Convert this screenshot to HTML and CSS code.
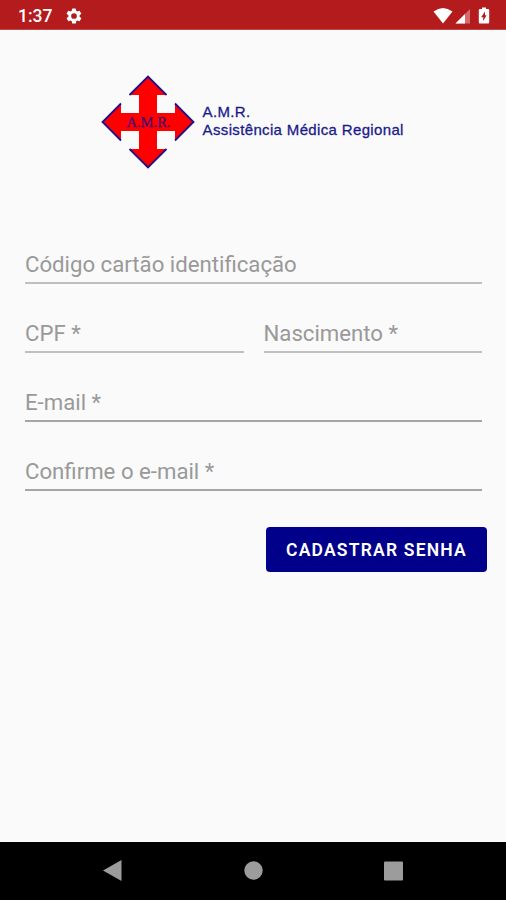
FILE: index.html
```html
<!DOCTYPE html>
<html lang="pt-BR">
<head>
<meta charset="utf-8">
<title>A.M.R. Cadastro</title>
<link rel="stylesheet" href="styles.css">
</head>
<body>
<header class="status">
  <span class="time">1:37</span>
  <svg class="gear" width="18" height="18" viewBox="0 0 24 24"><path fill="#fff" fill-rule="evenodd" d="M19.400 13a7.500 7.500 0 0 0 0-2l2.100-1.600a.5.5 0 0 0 .1-.7l-2-3.400a.5.5 0 0 0-.6-.2l-2.500 1a7.300 7.300 0 0 0-1.700-1l-.4-2.600a.5.5 0 0 0-.5-.5h-4a.5.5 0 0 0-.5.5l-.4 2.600a7.300 7.300 0 0 0-1.700 1l-2.500-1a.5.5 0 0 0-.6.2l-2 3.400a.5.5 0 0 0 .1.700L4.600 11a7.500 7.500 0 0 0 0 2l-2.200 1.600a.5.5 0 0 0-.1.700l2 3.400c.1.200.4.300.6.200l2.500-1a7.300 7.300 0 0 0 1.700 1l.4 2.600c0 .3.200.5.500.5h4c.3 0 .5-.2.5-.5l.4-2.600a7.300 7.300 0 0 0 1.700-1l2.500 1c.2.100.5 0 .6-.2l2-3.400a.5.5 0 0 0-.1-.7zM12 15.800a3.800 3.800 0 1 1 0-7.600 3.800 3.800 0 0 1 0 7.600z"/></svg>
  <svg class="signals" width="60" height="20" viewBox="0 0 60 20">
    <path fill="#fff" d="M.5 5.500Q10 -1.500 19.500 5.500L10 17.500Z"/>
    <path fill="#d66b6d" d="M22.500 17.500L37 3V17.500Z"/>
    <path fill="#fff" d="M22.500 17.500L32 8V17.500Z"/>
    <path fill="#fff" d="M49 1.500h4V3h2.200q1 0 1 1v12.500q0 1-1 1h-8.400q-1 0-1-1V4q0-1 1-1H49z"/>
    <path fill="#b31b1d" d="M52 5.500L48.100 11.300H50.200V15L53.600 9.300H52Z"/>
  </svg>
</header>
<main class="page">
  <div class="brand">
    <svg class="cross" width="94" height="94" viewBox="0 0 94 94">
      <path class="cross-fill" d="M47 1.500L65.500 20H56V38H74V28.500L92.500 47L74 65.500V56H56V74H65.500L47 92.500L28.500 74H38V56H20V65.500L1.500 47L20 28.500V38H38V20H28.500Z"/>
      <path class="cross-edge" d="M28.500 20L47 1.500L65.500 20M74 28.500L92.500 47L74 65.500M65.500 74L47 92.500L28.500 74M20 65.500L1.500 47L20 28.500"/>
      <text class="cross-text" x="25.500" y="51.500" textLength="44" lengthAdjust="spacingAndGlyphs">A.M.R.</text>
    </svg>
    <div class="brand-name"><div>A.M.R.</div><div>Assistência Médica Regional</div></div>
  </div>
  <form class="form">
    <div class="field light"><span>Código cartão identificação</span></div>
    <div class="row">
      <div class="field light"><span>CPF *</span></div>
      <div class="field light"><span>Nascimento *</span></div>
    </div>
    <div class="field"><span>E-mail *</span></div>
    <div class="field"><span>Confirme o e-mail *</span></div>
    <button class="submit" type="button">CADASTRAR SENHA</button>
  </form>
</main>
<footer class="nav">
  <svg width="506" height="58" viewBox="0 0 506 58">
    <path fill="#9c9c9c" d="M103 28.500L121.500 18V39Z"/>
    <circle cx="253.500" cy="28.500" r="9.200" fill="#9c9c9c"/>
    <rect x="384" y="19.500" width="19" height="19" rx="1" fill="#9c9c9c"/>
  </svg>
</footer>
</body>
</html>
```
FILE: styles.css
```css
* { box-sizing: border-box; }
body {
  margin: 0;
  height: 900px;
  display: flex;
  flex-direction: column;
  background: #fafafa;
  font-family: Roboto, sans-serif;
  overflow: hidden;
}
.status {
  height: 30px;
  flex: none;
  display: flex;
  align-items: center;
  padding: 2px 13px 0 18px;
  background: #b31b1d;
  border-bottom: 1px solid #c04a4b;
  color: #fff;
}
.time { width: 47px; font-size: 17.500px; font-weight: 500; line-height: 20px; }
.signals { margin-left: auto; }
.page { flex: 1; display: flex; flex-direction: column; }
.brand { display: flex; margin: 45px 0 0 100.600px; height: 94px; gap: 8px; }
.cross { flex: none; }
.cross-fill { fill: #ff0000; }
.cross-edge { fill: none; stroke: #20108c; stroke-width: 1.800; }
.cross-text { fill: #4a0a70; stroke: #4a0a70; stroke-width: 0.250; font: 14px "Liberation Serif", serif; }
.brand-name {
  padding-top: 28px;
  font: 15px/18px "Liberation Sans", sans-serif;
  color: #1a1a8c;
  letter-spacing: 0.350px;
  white-space: nowrap;
  -webkit-text-stroke: 0.300px #1a1a8c;
}
.form {
  margin: 78px 24px 0 25px;
  display: flex;
  flex-direction: column;
  gap: 32px;
}
.row { display: grid; grid-template-columns: 1fr 1fr; gap: 20px; }
.field {
  height: 37px;
  border-bottom: 2px solid #a5a5a5;
  color: #999;
  font-size: 22.200px;
  line-height: 35px;
  white-space: nowrap;
}
.light { border-bottom-color: #bfbfbf; }
.submit {
  align-self: flex-end;
  width: 221px;
  height: 45px;
  margin: 4px -5px 0 0;
  padding: 1px 0 0;
  border: 0;
  border-radius: 4px;
  background: #00008b;
  color: #fff;
  font: 600 17.500px Roboto, sans-serif;
  letter-spacing: 1.200px;
  white-space: nowrap;
}
.nav { height: 58px; flex: none; background: #000; }
.nav svg { display: block; }
```
